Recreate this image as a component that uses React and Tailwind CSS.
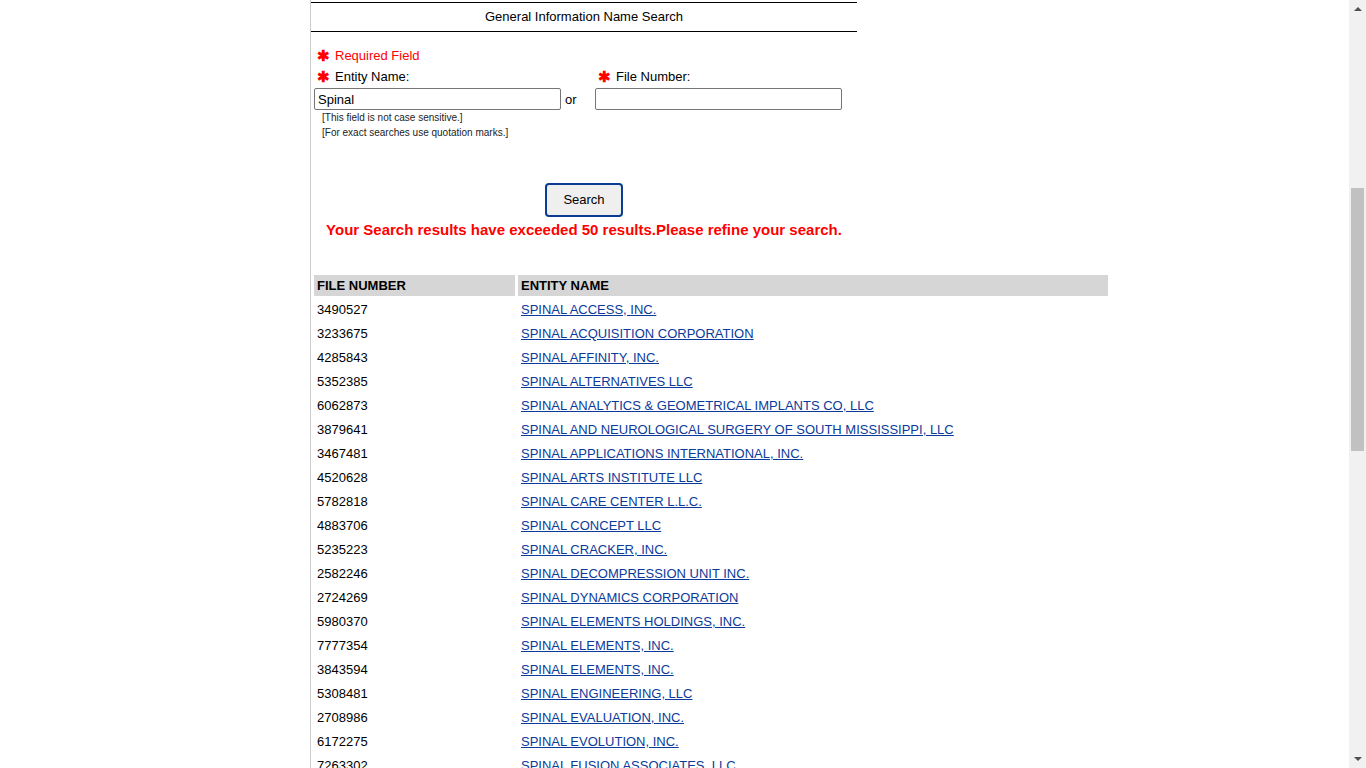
import React from "react";

const rows = [
  ["3490527", "SPINAL ACCESS, INC."],
  ["3233675", "SPINAL ACQUISITION CORPORATION"],
  ["4285843", "SPINAL AFFINITY, INC."],
  ["5352385", "SPINAL ALTERNATIVES LLC"],
  ["6062873", "SPINAL ANALYTICS & GEOMETRICAL IMPLANTS CO, LLC"],
  ["3879641", "SPINAL AND NEUROLOGICAL SURGERY OF SOUTH MISSISSIPPI, LLC"],
  ["3467481", "SPINAL APPLICATIONS INTERNATIONAL, INC."],
  ["4520628", "SPINAL ARTS INSTITUTE LLC"],
  ["5782818", "SPINAL CARE CENTER L.L.C."],
  ["4883706", "SPINAL CONCEPT LLC"],
  ["5235223", "SPINAL CRACKER, INC."],
  ["2582246", "SPINAL DECOMPRESSION UNIT INC."],
  ["2724269", "SPINAL DYNAMICS CORPORATION"],
  ["5980370", "SPINAL ELEMENTS HOLDINGS, INC."],
  ["7777354", "SPINAL ELEMENTS, INC."],
  ["3843594", "SPINAL ELEMENTS, INC."],
  ["5308481", "SPINAL ENGINEERING, LLC"],
  ["2708986", "SPINAL EVALUATION, INC."],
  ["6172275", "SPINAL EVOLUTION, INC."],
  ["7263302", "SPINAL FUSION ASSOCIATES, LLC"],
  ["4418790", "SPINAL GROUP, INC."],
];

function Star() {
  return <span className="w-[18px] text-[#ff0000] text-[15px] font-bold leading-none">✱</span>;
}

export default function App() {
  return (
    <div className="h-screen overflow-hidden flex bg-white font-['Liberation_Sans',Arial,sans-serif] text-[13px] text-black">
      <div className="flex-1 overflow-hidden">
        <div className="ml-[310px] border-l border-[#cccccc] min-h-full pt-[2px]">
          <div className="w-[546px]">
            {/* Title */}
            <div className="h-[30px] border-y border-black flex items-center justify-center">
              General Information Name Search
            </div>

            {/* Form */}
            <div className="mt-[13px] pl-[3px]">
              <div className="h-[21px] flex items-center pl-[3px] text-[#ff0000]">
                <Star />
                Required Field
              </div>
              <div className="grid grid-cols-[281px_247px]">
                <div className="h-[21px] flex items-center pl-[3px]">
                  <Star />
                  Entity Name:
                </div>
                <div className="h-[21px] flex items-center pl-[3px]">
                  <Star />
                  File Number:
                </div>
                <div className="mt-[1px] flex items-center">
                  <input
                    type="text"
                    defaultValue="Spinal"
                    className="w-[247px] h-[22px] border border-[#767676] rounded-[2px] px-[3px] text-[13px] outline-none"
                  />
                  <span className="ml-[4px] mt-[1px]">or</span>
                </div>
                <div className="mt-[1px]">
                  <input
                    type="text"
                    className="w-[247px] h-[22px] border border-[#767676] rounded-[2px] px-[3px] text-[13px] outline-none"
                  />
                </div>
              </div>
              <div className="pl-[8px] text-[10px] leading-[15px] text-[#222]">
                <div>[This field is not case sensitive.]</div>
                <div>[For exact searches use quotation marks.]</div>
              </div>
            </div>

            <div className="mt-[43px] flex justify-center">
              <button className="w-[78px] h-[34px] border-2 border-[#0a3d91] rounded-[4px] bg-[#efefef] text-[13px]">
                Search
              </button>
            </div>
            <div className="mt-[3px] h-[20px] flex items-center justify-center text-[15px] font-bold text-[#ff0000]">
              Your Search results have exceeded 50 results.Please refine your search.
            </div>
          </div>

          {/* Results */}
          <table className="mt-[32px] w-[800px] border-separate border-spacing-[3px]">
            <thead>
              <tr className="text-left">
                <th className="w-[201px] h-[21px] bg-[#d6d6d6] pl-[3px] font-bold">FILE NUMBER</th>
                <th className="h-[21px] bg-[#d6d6d6] pl-[3px] font-bold">ENTITY NAME</th>
              </tr>
            </thead>
            <tbody>
              {rows.map(([num, name]) => (
                <tr key={num + name}>
                  <td className="h-[21px] pl-[3px]">{num}</td>
                  <td className="h-[21px] pl-[3px]">
                    <a href="#" className="text-[#0b3a9b] underline">
                      {name}
                    </a>
                  </td>
                </tr>
              ))}
            </tbody>
          </table>
        </div>
      </div>

      {/* Scrollbar */}
      <div className="w-[17px] bg-[#f1f1f1] flex flex-col items-center">
        <div className="h-[17px] flex items-center justify-center">
          <svg width="8" height="5" viewBox="0 0 8 5">
            <path d="M0 5 L4 1 L8 5 Z" fill="#505050" />
          </svg>
        </div>
        <div className="flex-1 w-full px-[2px]">
          <div className="mt-[171px] h-[263px] bg-[#c1c1c1]" />
        </div>
        <div className="h-[17px] flex items-center justify-center">
          <svg width="8" height="5" viewBox="0 0 8 5">
            <path d="M0 0 L4 4 L8 0 Z" fill="#505050" />
          </svg>
        </div>
      </div>
    </div>
  );
}
